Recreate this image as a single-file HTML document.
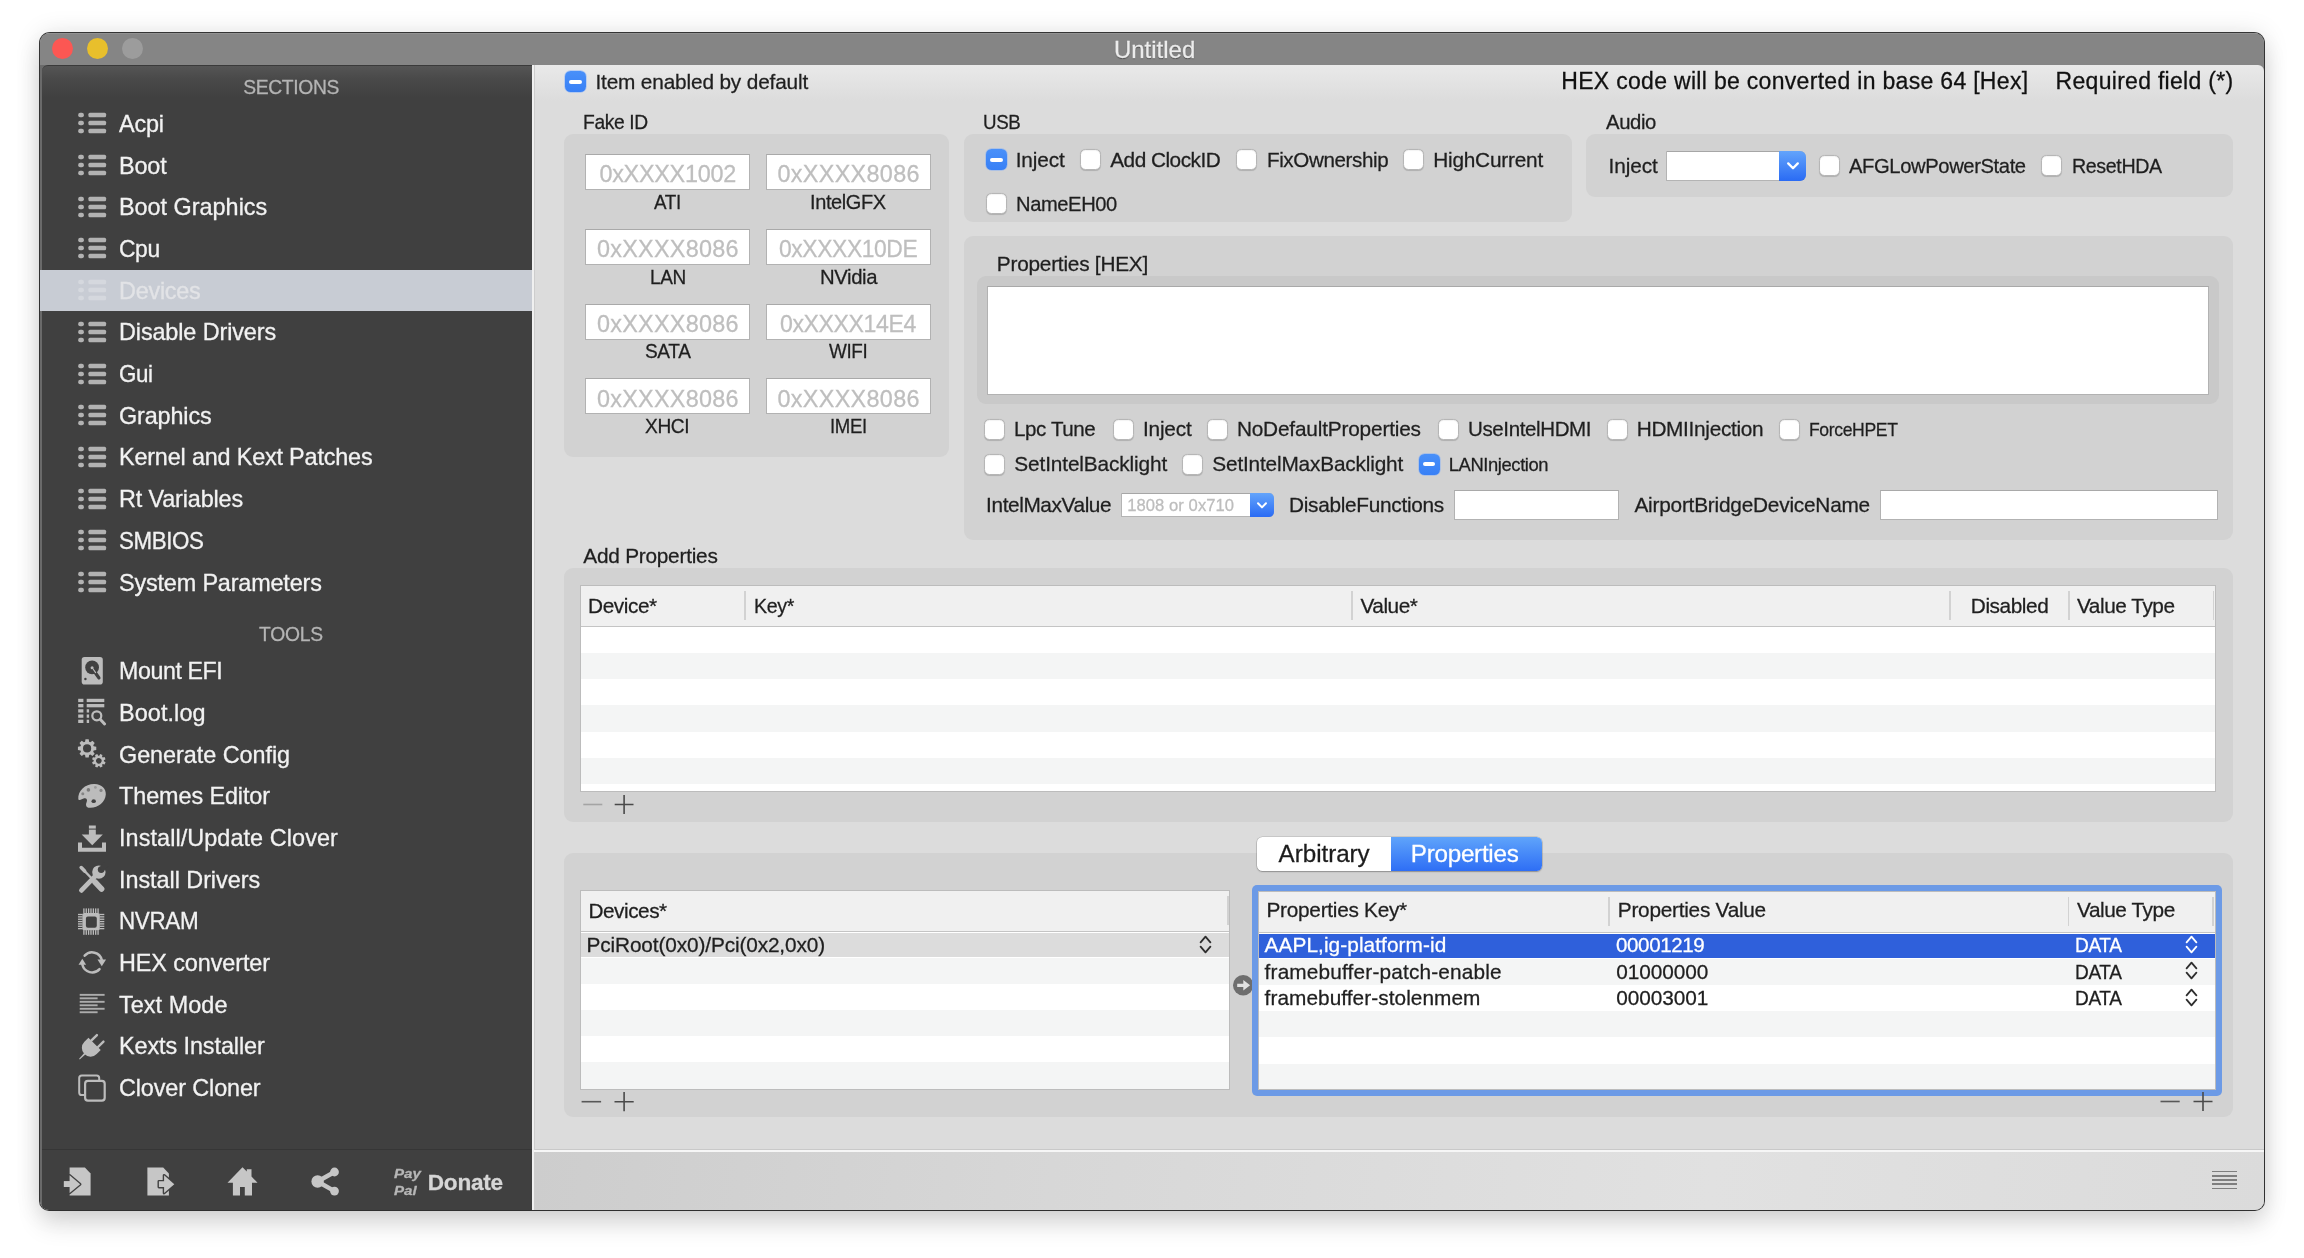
<!DOCTYPE html>
<html lang="en"><head><meta charset="utf-8"><title>Untitled</title>
<style>
html,body{margin:0;padding:0;background:#fff;}
body{width:2304px;height:1258px;overflow:hidden;position:relative;font-family:"Liberation Sans",sans-serif;}
#shadow{position:absolute;left:40px;top:33px;width:2224px;height:1177px;border-radius:10px 10px 9px 9px;
 box-shadow:0 0 0 1px rgba(0,0,0,.78),0 15px 24px rgba(0,0,0,.12),0 1px 26px rgba(0,0,0,.13);}
#win{position:absolute;left:40px;top:33px;width:2224px;height:1177px;border-radius:10px 10px 9px 9px;overflow:hidden;background:#858585;}
#in{will-change:transform;position:absolute;left:-40px;top:-33px;width:2304px;height:1258px;}
#in div{position:absolute;box-sizing:border-box;}
#in svg{position:absolute;overflow:visible;}
.t{position:absolute;white-space:pre;}
.cb{background:#fff;border:1px solid #b6b6b6;border-radius:5.5px;box-shadow:inset 0 1px 1px rgba(0,0,0,.05),0 .6px .8px rgba(0,0,0,.16);}
.cbm{border-radius:5.5px;background:linear-gradient(#4990f9,#3880f6);box-shadow:0 0 0 .7px rgba(120,170,255,.55);}
.cbm:after{content:"";position:absolute;left:4.4px;right:4.4px;top:8.7px;height:3.6px;border-radius:2px;background:#fff;}
.grp{background:#d2d2d2;border-radius:9px;}
.fld{background:#fff;border:1px solid #b2b2b2;border-top-color:#a9a9a9;}

</style></head>
<body>
<div id="shadow"></div>
<div id="win"><div id="in">
<div style="left:40px;top:33px;width:2225px;height:32px;background:#858585;border-top:1px solid #929292;"></div>
<div style="left:52.2px;top:38.1px;width:21px;height:21px;border-radius:50%;background:#fc5753;"></div>
<div style="left:87px;top:38.1px;width:21px;height:21px;border-radius:50%;background:#e8bf2c;"></div>
<div style="left:121.5px;top:38.1px;width:21px;height:21px;border-radius:50%;background:#9c9c9c;"></div>
<div style="left:40px;top:64.5px;width:492px;height:1147px;background:#6a6a6a;"></div>
<div style="left:41.5px;top:64.5px;width:490.5px;height:1147px;background:linear-gradient(#555 0,#4a4a4a 12px,#404040 32px);border-top-left-radius:6px;border-top:1px solid #3a3a3a;"></div>
<div style="left:40px;top:269.5px;width:492px;height:41.5px;background:#c8ccd4;"></div>
<svg style="left:78px;top:111.3px" width="29" height="24" viewBox="0 0 29 24" fill="#b2b2b2"><rect x="0.2" y="1.75" width="5.7" height="4.6" rx="2"/><rect x="10.4" y="1.75" width="17.7" height="4.6" rx="1.5"/><rect x="0.2" y="9.70" width="5.7" height="4.6" rx="2"/><rect x="10.4" y="9.70" width="17.7" height="4.6" rx="1.5"/><rect x="0.2" y="17.65" width="5.7" height="4.6" rx="2"/><rect x="10.4" y="17.65" width="17.7" height="4.6" rx="1.5"/></svg>
<svg style="left:78px;top:153.0px" width="29" height="24" viewBox="0 0 29 24" fill="#b2b2b2"><rect x="0.2" y="1.75" width="5.7" height="4.6" rx="2"/><rect x="10.4" y="1.75" width="17.7" height="4.6" rx="1.5"/><rect x="0.2" y="9.70" width="5.7" height="4.6" rx="2"/><rect x="10.4" y="9.70" width="17.7" height="4.6" rx="1.5"/><rect x="0.2" y="17.65" width="5.7" height="4.6" rx="2"/><rect x="10.4" y="17.65" width="17.7" height="4.6" rx="1.5"/></svg>
<svg style="left:78px;top:194.7px" width="29" height="24" viewBox="0 0 29 24" fill="#b2b2b2"><rect x="0.2" y="1.75" width="5.7" height="4.6" rx="2"/><rect x="10.4" y="1.75" width="17.7" height="4.6" rx="1.5"/><rect x="0.2" y="9.70" width="5.7" height="4.6" rx="2"/><rect x="10.4" y="9.70" width="17.7" height="4.6" rx="1.5"/><rect x="0.2" y="17.65" width="5.7" height="4.6" rx="2"/><rect x="10.4" y="17.65" width="17.7" height="4.6" rx="1.5"/></svg>
<svg style="left:78px;top:236.4px" width="29" height="24" viewBox="0 0 29 24" fill="#b2b2b2"><rect x="0.2" y="1.75" width="5.7" height="4.6" rx="2"/><rect x="10.4" y="1.75" width="17.7" height="4.6" rx="1.5"/><rect x="0.2" y="9.70" width="5.7" height="4.6" rx="2"/><rect x="10.4" y="9.70" width="17.7" height="4.6" rx="1.5"/><rect x="0.2" y="17.65" width="5.7" height="4.6" rx="2"/><rect x="10.4" y="17.65" width="17.7" height="4.6" rx="1.5"/></svg>
<svg style="left:78px;top:278.1px" width="29" height="24" viewBox="0 0 29 24" fill="#d5d8de"><rect x="0.2" y="1.75" width="5.7" height="4.6" rx="2"/><rect x="10.4" y="1.75" width="17.7" height="4.6" rx="1.5"/><rect x="0.2" y="9.70" width="5.7" height="4.6" rx="2"/><rect x="10.4" y="9.70" width="17.7" height="4.6" rx="1.5"/><rect x="0.2" y="17.65" width="5.7" height="4.6" rx="2"/><rect x="10.4" y="17.65" width="17.7" height="4.6" rx="1.5"/></svg>
<svg style="left:78px;top:319.8px" width="29" height="24" viewBox="0 0 29 24" fill="#b2b2b2"><rect x="0.2" y="1.75" width="5.7" height="4.6" rx="2"/><rect x="10.4" y="1.75" width="17.7" height="4.6" rx="1.5"/><rect x="0.2" y="9.70" width="5.7" height="4.6" rx="2"/><rect x="10.4" y="9.70" width="17.7" height="4.6" rx="1.5"/><rect x="0.2" y="17.65" width="5.7" height="4.6" rx="2"/><rect x="10.4" y="17.65" width="17.7" height="4.6" rx="1.5"/></svg>
<svg style="left:78px;top:361.5px" width="29" height="24" viewBox="0 0 29 24" fill="#b2b2b2"><rect x="0.2" y="1.75" width="5.7" height="4.6" rx="2"/><rect x="10.4" y="1.75" width="17.7" height="4.6" rx="1.5"/><rect x="0.2" y="9.70" width="5.7" height="4.6" rx="2"/><rect x="10.4" y="9.70" width="17.7" height="4.6" rx="1.5"/><rect x="0.2" y="17.65" width="5.7" height="4.6" rx="2"/><rect x="10.4" y="17.65" width="17.7" height="4.6" rx="1.5"/></svg>
<svg style="left:78px;top:403.2px" width="29" height="24" viewBox="0 0 29 24" fill="#b2b2b2"><rect x="0.2" y="1.75" width="5.7" height="4.6" rx="2"/><rect x="10.4" y="1.75" width="17.7" height="4.6" rx="1.5"/><rect x="0.2" y="9.70" width="5.7" height="4.6" rx="2"/><rect x="10.4" y="9.70" width="17.7" height="4.6" rx="1.5"/><rect x="0.2" y="17.65" width="5.7" height="4.6" rx="2"/><rect x="10.4" y="17.65" width="17.7" height="4.6" rx="1.5"/></svg>
<svg style="left:78px;top:444.9px" width="29" height="24" viewBox="0 0 29 24" fill="#b2b2b2"><rect x="0.2" y="1.75" width="5.7" height="4.6" rx="2"/><rect x="10.4" y="1.75" width="17.7" height="4.6" rx="1.5"/><rect x="0.2" y="9.70" width="5.7" height="4.6" rx="2"/><rect x="10.4" y="9.70" width="17.7" height="4.6" rx="1.5"/><rect x="0.2" y="17.65" width="5.7" height="4.6" rx="2"/><rect x="10.4" y="17.65" width="17.7" height="4.6" rx="1.5"/></svg>
<svg style="left:78px;top:486.6px" width="29" height="24" viewBox="0 0 29 24" fill="#b2b2b2"><rect x="0.2" y="1.75" width="5.7" height="4.6" rx="2"/><rect x="10.4" y="1.75" width="17.7" height="4.6" rx="1.5"/><rect x="0.2" y="9.70" width="5.7" height="4.6" rx="2"/><rect x="10.4" y="9.70" width="17.7" height="4.6" rx="1.5"/><rect x="0.2" y="17.65" width="5.7" height="4.6" rx="2"/><rect x="10.4" y="17.65" width="17.7" height="4.6" rx="1.5"/></svg>
<svg style="left:78px;top:528.3px" width="29" height="24" viewBox="0 0 29 24" fill="#b2b2b2"><rect x="0.2" y="1.75" width="5.7" height="4.6" rx="2"/><rect x="10.4" y="1.75" width="17.7" height="4.6" rx="1.5"/><rect x="0.2" y="9.70" width="5.7" height="4.6" rx="2"/><rect x="10.4" y="9.70" width="17.7" height="4.6" rx="1.5"/><rect x="0.2" y="17.65" width="5.7" height="4.6" rx="2"/><rect x="10.4" y="17.65" width="17.7" height="4.6" rx="1.5"/></svg>
<svg style="left:78px;top:570.0px" width="29" height="24" viewBox="0 0 29 24" fill="#b2b2b2"><rect x="0.2" y="1.75" width="5.7" height="4.6" rx="2"/><rect x="10.4" y="1.75" width="17.7" height="4.6" rx="1.5"/><rect x="0.2" y="9.70" width="5.7" height="4.6" rx="2"/><rect x="10.4" y="9.70" width="17.7" height="4.6" rx="1.5"/><rect x="0.2" y="17.65" width="5.7" height="4.6" rx="2"/><rect x="10.4" y="17.65" width="17.7" height="4.6" rx="1.5"/></svg>
<div style="left:41.5px;top:1149px;width:490.5px;height:1px;background:#363636;"></div>
<svg style="left:0;top:0" width="2304" height="1258" viewBox="0 0 2304 1258"><rect x="81.7" y="657" width="21.1" height="27.6" rx="2.8" fill="#bcbcbc"/><circle cx="92.1" cy="667.4" r="6.9" fill="#404040"/><circle cx="92.1" cy="667.7" r="1.5" fill="#bcbcbc"/><path d="M93.6 670.2 L98.9 677.9" stroke="#404040" stroke-width="3.3" stroke-linecap="round"/><path d="M92.4 668 L95.6 672.6" stroke="#bcbcbc" stroke-width="1.1" stroke-linecap="round"/><circle cx="85.4" cy="679" r="1.2" fill="#404040"/><g fill="#bcbcbc"><rect x="78.2" y="698.80" width="5.2" height="3.3"/><rect x="86.7" y="698.80" width="17.6" height="3.3"/><rect x="78.2" y="704.02" width="5.2" height="3.3"/><rect x="86.7" y="704.02" width="17.6" height="3.3"/><rect x="78.2" y="709.24" width="5.2" height="3.3"/><rect x="86.7" y="709.24" width="2.4" height="3.3"/><rect x="78.2" y="714.46" width="5.2" height="3.3"/><rect x="86.7" y="714.46" width="2.4" height="3.3"/><rect x="78.2" y="719.68" width="5.2" height="3.3"/><rect x="86.7" y="719.68" width="2.4" height="3.3"/></g><circle cx="96.8" cy="715.8" r="4.5" fill="none" stroke="#bcbcbc" stroke-width="2.2"/><path d="M100.4 719.5 L104.6 724" stroke="#bcbcbc" stroke-width="3" stroke-linecap="round"/><path d="M93.69 746.37 L96.26 746.80 L96.26 750.00 L93.69 750.43 L93.20 751.63 L94.71 753.75 L92.45 756.01 L90.33 754.50 L89.13 754.99 L88.70 757.56 L85.50 757.56 L85.07 754.99 L83.87 754.50 L81.75 756.01 L79.49 753.75 L81.00 751.63 L80.51 750.43 L77.94 750.00 L77.94 746.80 L80.51 746.37 L81.00 745.17 L79.49 743.05 L81.75 740.79 L83.87 742.30 L85.07 741.81 L85.50 739.24 L88.70 739.24 L89.13 741.81 L90.33 742.30 L92.45 740.79 L94.71 743.05 L93.20 745.17 Z M91.20 748.40 A4.1 4.1 0 1 0 83.00 748.40 A4.1 4.1 0 1 0 91.20 748.40 Z" fill="#bcbcbc" fill-rule="evenodd"/><path d="M103.67 759.30 L105.60 759.61 L105.60 761.99 L103.67 762.30 L103.31 763.19 L104.45 764.77 L102.77 766.45 L101.19 765.31 L100.30 765.67 L99.99 767.60 L97.61 767.60 L97.30 765.67 L96.41 765.31 L94.83 766.45 L93.15 764.77 L94.29 763.19 L93.93 762.30 L92.00 761.99 L92.00 759.61 L93.93 759.30 L94.29 758.41 L93.15 756.83 L94.83 755.15 L96.41 756.29 L97.30 755.93 L97.61 754.00 L99.99 754.00 L100.30 755.93 L101.19 756.29 L102.77 755.15 L104.45 756.83 L103.31 758.41 Z M101.60 760.80 A2.8 2.8 0 1 0 96.00 760.80 A2.8 2.8 0 1 0 101.60 760.80 Z" fill="#bcbcbc" fill-rule="evenodd" transform="rotate(22 98.8 760.8)"/><path d="M78.3 799.2 C77.6 790.5 85.5 783.6 94.6 783.9 C101.8 784.2 106.2 788.8 105.8 794.6 C105.3 802.4 97.8 808.2 89.6 807.8 C86 807.6 85.4 804.8 86.6 802.2 C87.7 799.7 86.6 797.8 84.2 798.3 C81.9 798.8 79.6 801.4 78.3 799.2 Z" fill="#bcbcbc"/><ellipse cx="93.7" cy="801.2" rx="2.2" ry="1.9" fill="#404040"/><circle cx="82.8" cy="793.7" r="1.5" fill="#858585"/><circle cx="88.4" cy="789.9" r="1.8" fill="#7a7a7a"/><circle cx="95.4" cy="787.4" r="1.4" fill="#9a9a9a"/><circle cx="101" cy="790.4" r="1.6" fill="#858585"/><g fill="#bcbcbc"><rect x="88.9" y="825.5" width="6.9" height="3.1"/><rect x="88.9" y="829.6" width="6.9" height="5.4"/><path d="M81.7 834.6 H102.8 L92.25 845.2 Z"/><path d="M78 842.5 h4 v5.3 h20 v-5.3 h4 v9.3 h-28 Z"/></g><g stroke="#bcbcbc" stroke-linecap="round" fill="none"><path d="M81.2 867.6 L84.6 871" stroke-width="3.6"/><path d="M82 868.4 L92.5 879.3" stroke-width="2.3"/><path d="M95 882 L101.6 889" stroke-width="5.6"/><path d="M81.4 890.4 L95.5 875.8" stroke-width="4.7"/></g><circle cx="98.9" cy="872.1" r="6.7" fill="#bcbcbc"/><circle cx="101.2" cy="869.6" r="3.4" fill="#404040"/><path d="M101.2 869.6 L107 863.5" stroke="#404040" stroke-width="5.6"/><g fill="#bcbcbc"><rect x="83.25" y="908.4" width="1.3" height="4.7"/><rect x="83.25" y="930.1" width="1.3" height="4.7"/><rect x="78" y="913.85" width="4.6" height="1.3"/><rect x="99.6" y="913.85" width="4.7" height="1.3"/><rect x="85.61" y="908.4" width="1.3" height="4.7"/><rect x="85.61" y="930.1" width="1.3" height="4.7"/><rect x="78" y="916.21" width="4.6" height="1.3"/><rect x="99.6" y="916.21" width="4.7" height="1.3"/><rect x="87.97" y="908.4" width="1.3" height="4.7"/><rect x="87.97" y="930.1" width="1.3" height="4.7"/><rect x="78" y="918.57" width="4.6" height="1.3"/><rect x="99.6" y="918.57" width="4.7" height="1.3"/><rect x="90.33" y="908.4" width="1.3" height="4.7"/><rect x="90.33" y="930.1" width="1.3" height="4.7"/><rect x="78" y="920.93" width="4.6" height="1.3"/><rect x="99.6" y="920.93" width="4.7" height="1.3"/><rect x="92.69" y="908.4" width="1.3" height="4.7"/><rect x="92.69" y="930.1" width="1.3" height="4.7"/><rect x="78" y="923.29" width="4.6" height="1.3"/><rect x="99.6" y="923.29" width="4.7" height="1.3"/><rect x="95.05" y="908.4" width="1.3" height="4.7"/><rect x="95.05" y="930.1" width="1.3" height="4.7"/><rect x="78" y="925.65" width="4.6" height="1.3"/><rect x="99.6" y="925.65" width="4.7" height="1.3"/><rect x="97.41" y="908.4" width="1.3" height="4.7"/><rect x="97.41" y="930.1" width="1.3" height="4.7"/><rect x="78" y="928.01" width="4.6" height="1.3"/><rect x="99.6" y="928.01" width="4.7" height="1.3"/><rect x="82.4" y="912.9" width="17.4" height="17.4" rx="1.6"/></g><rect x="85.9" y="916.4" width="10.9" height="11.4" rx="2" fill="#404040"/><g fill="none" stroke="#bcbcbc" stroke-width="2.5" stroke-linecap="round"><path d="M84.67 955.71 A10 10 0 0 1 101.80 959.98"/><path d="M99.53 969.09 A10 10 0 0 1 82.40 964.82"/></g><path d="M97.49 959.55 L106.09 959.55 L101.79 966.35 Z" fill="#bcbcbc"/><path d="M86.11 964.85 L78.51 964.85 L82.31 958.85 Z" fill="#bcbcbc"/><g fill="#acacac"><rect x="79.7" y="993.90" width="24.9" height="1.9"/><rect x="79.7" y="997.38" width="17.9" height="1.9"/><rect x="79.7" y="1000.86" width="24.9" height="1.9"/><rect x="79.7" y="1004.34" width="17.9" height="1.9"/><rect x="79.7" y="1007.82" width="24.9" height="1.9"/><rect x="79.7" y="1011.30" width="17.9" height="1.9"/></g><g transform="translate(94.6 1043.9) rotate(45) scale(1.1)" fill="#bcbcbc"><rect x="-5.3" y="-8.2" width="2.2" height="9" rx="1"/><rect x="3.1" y="-8.2" width="2.2" height="9" rx="1"/><path d="M-7.9 0 H7.9 V5.2 A7.9 7.9 0 0 1 -7.9 5.2 Z"/><path d="M-0.9 12.5 L0.9 12.5 L0.4 19.5 L-0.4 19.5 Z"/></g><rect x="79.2" y="1075.4" width="20" height="19.6" rx="2.6" fill="none" stroke="#bcbcbc" stroke-width="2"/><rect x="85.1" y="1080.9" width="19.6" height="19.7" rx="2.8" fill="#404040" stroke="#bcbcbc" stroke-width="2.2"/><path d="M69.6 1167.4 H84.9 L90.6 1173.6 V1195.6 H69.6 Z" fill="#c6c6c6"/><path d="M63.9 1181.3 H69.6 V1175.3 L80.2 1184.15 L69.6 1193 V1187 H63.9 Z" fill="#c6c6c6" stroke="#404040" stroke-width="2.6" stroke-linejoin="round" paint-order="stroke"/><path d="M63.9 1181.3 H70 V1187 H63.9 Z" fill="#c6c6c6"/><path d="M147.4 1167.4 H163.2 L168.9 1173.6 V1195.6 H147.4 Z" fill="#c6c6c6"/><path d="M158.9 1181.3 H164.1 V1175.3 L174.3 1184.15 L164.1 1193 V1187 H158.9 Z" fill="#c6c6c6" stroke="#404040" stroke-width="2.8" stroke-linejoin="round" paint-order="stroke"/><path d="M242.5 1167.2 L246.8 1171.6 V1169.3 H251.5 V1176.5 L257.5 1182.7 H252 V1195.6 H244.8 V1187 H240 V1195.6 H232.9 V1182.7 H227.5 Z" fill="#c6c6c6"/><g fill="#c6c6c6" stroke="#c6c6c6"><circle cx="317.6" cy="1181.5" r="6.2" stroke="none"/><circle cx="334.5" cy="1172" r="4.4" stroke="none"/><circle cx="334.5" cy="1191.1" r="4.4" stroke="none"/><path d="M317.6 1181.5 L334.5 1172 M317.6 1181.5 L334.5 1191.1" stroke-width="4.4" fill="none"/></g></svg>
<div style="left:532px;top:64.5px;width:1732px;height:1147px;background:linear-gradient(#e9e9e9 0,#dcdcdc 36px);border-top-right-radius:6px;"></div>
<div style="left:532px;top:64.5px;width:2px;height:1147px;background:#f0f0f0;"></div>
<div style="left:534px;top:1148.6px;width:1730px;height:1.2px;background:#c9c9c9;"></div>
<div style="left:534px;top:1149.8px;width:1730px;height:61.5px;background:linear-gradient(97deg,#cdcdcd 0%,#d7d7d7 30%,#e1e1e1 68%,#dbdbdb 100%);border-top:2px solid #f6f6f6;"></div>
<div style="left:534px;top:64.5px;width:1px;height:1085px;background:#cdcdcd;"></div>
<div style="left:2211.5px;top:1170.8px;width:25.3px;height:1.6px;background:#7e7e7e;"></div>
<div style="left:2211.5px;top:1175px;width:25.3px;height:1.6px;background:#7e7e7e;"></div>
<div style="left:2211.5px;top:1179.2px;width:25.3px;height:1.6px;background:#7e7e7e;"></div>
<div style="left:2211.5px;top:1183.4px;width:25.3px;height:1.6px;background:#7e7e7e;"></div>
<div style="left:2211.5px;top:1187.6px;width:25.3px;height:1.6px;background:#7e7e7e;"></div>
<div class="cbm" style="left:565px;top:71.3px;width:21px;height:21px;"></div>
<div class="grp" style="left:563.5px;top:134.2px;width:385.5px;height:322.8px;"></div>
<div class="fld" style="left:585.3px;top:154px;width:165px;height:36px;"></div>
<div class="fld" style="left:766px;top:154px;width:165px;height:36px;"></div>
<div class="fld" style="left:585.3px;top:228.75px;width:165px;height:36px;"></div>
<div class="fld" style="left:766px;top:228.75px;width:165px;height:36px;"></div>
<div class="fld" style="left:585.3px;top:303.5px;width:165px;height:36px;"></div>
<div class="fld" style="left:766px;top:303.5px;width:165px;height:36px;"></div>
<div class="fld" style="left:585.3px;top:378.25px;width:165px;height:36px;"></div>
<div class="fld" style="left:766px;top:378.25px;width:165px;height:36px;"></div>
<div class="grp" style="left:963.5px;top:134px;width:608.5px;height:88px;"></div>
<div class="cbm" style="left:986.1px;top:149.3px;width:21px;height:21px;"></div>
<div class="cb" style="left:1079.8px;top:149.3px;width:21px;height:21px;"></div>
<div class="cb" style="left:1236.1px;top:149.3px;width:21px;height:21px;"></div>
<div class="cb" style="left:1403.1px;top:149.3px;width:21px;height:21px;"></div>
<div class="cb" style="left:986.1px;top:193.2px;width:21px;height:21px;"></div>
<div class="grp" style="left:1585.8px;top:134px;width:647px;height:62.5px;"></div>
<div style="left:1666.4px;top:151.4px;width:139.7px;height:29.2px;background:#fff;border:1px solid #b4b4b4;border-top-color:#a6a6a6;border-radius:0 6px 6px 0;"></div>
<div style="left:1779px;top:151.4px;width:27.1px;height:29.2px;background:linear-gradient(#63a4fb,#2a6bf4);border-radius:0 6px 6px 0;"></div>
<svg style="left:1785.5px;top:160.5px" width="14" height="10" viewBox="0 0 14 10"><path d="M2.2 2.4 L7 7.3 L11.8 2.4" fill="none" stroke="#fff" stroke-width="2.3" stroke-linecap="round" stroke-linejoin="round"/></svg>
<div class="cb" style="left:1818.8px;top:154.6px;width:21px;height:21px;"></div>
<div class="cb" style="left:2041.4px;top:154.6px;width:21px;height:21px;"></div>
<div class="grp" style="left:963.5px;top:236.3px;width:1269.2px;height:304.2px;"></div>
<div style="left:977.4px;top:276.3px;width:1241.8px;height:128.1px;background:#c9c9c9;border-radius:9px;"></div>
<div class="fld" style="left:986.7px;top:285.6px;width:1222.6px;height:109.5px;"></div>
<div class="cb" style="left:984.2px;top:418.8px;width:21px;height:21px;"></div>
<div class="cb" style="left:1112.8px;top:418.8px;width:21px;height:21px;"></div>
<div class="cb" style="left:1206.5px;top:418.8px;width:21px;height:21px;"></div>
<div class="cb" style="left:1437.8px;top:418.8px;width:21px;height:21px;"></div>
<div class="cb" style="left:1606.8px;top:418.8px;width:21px;height:21px;"></div>
<div class="cb" style="left:1778.9px;top:418.8px;width:21px;height:21px;"></div>
<div class="cb" style="left:984.2px;top:453.8px;width:21px;height:21px;"></div>
<div class="cb" style="left:1182.2px;top:453.8px;width:21px;height:21px;"></div>
<div class="cbm" style="left:1418.7px;top:453.8px;width:21px;height:21px;"></div>
<div style="left:1120.7px;top:493px;width:152.9px;height:24.2px;background:#fff;border:1px solid #b4b4b4;border-top-color:#a6a6a6;border-radius:0 5px 5px 0;"></div>
<div style="left:1250.1px;top:493px;width:23.5px;height:24.2px;background:linear-gradient(#63a4fb,#2a6bf4);border-radius:0 5px 5px 0;"></div>
<svg style="left:1255.8px;top:501.2px" width="12" height="9" viewBox="0 0 12 9"><path d="M2 2.3 L6 6.4 L10 2.3" fill="none" stroke="#fff" stroke-width="2" stroke-linecap="round" stroke-linejoin="round"/></svg>
<div class="fld" style="left:1454px;top:489.6px;width:164.6px;height:30.4px;"></div>
<div class="fld" style="left:1879.8px;top:489.6px;width:338px;height:30.4px;"></div>
<div class="grp" style="left:563.5px;top:568.1px;width:1669.2px;height:254px;"></div>
<div style="left:579.6px;top:585px;width:1636.6px;height:206.5px;background:#fff;border:1px solid #bcbcbc;overflow:hidden;"><div style="left:0;top:0;width:1634.6px;height:40.8px;background:#f0f0f0;border-bottom:1px solid #c4c4c4;"></div><div style="left:0;top:41.1px;width:1634.6px;height:26.3px;background:#fff;"></div><div style="left:0;top:67.2px;width:1634.6px;height:26.3px;background:#f4f5f5;"></div><div style="left:0;top:93.3px;width:1634.6px;height:26.3px;background:#fff;"></div><div style="left:0;top:119.4px;width:1634.6px;height:26.3px;background:#f4f5f5;"></div><div style="left:0;top:145.5px;width:1634.6px;height:26.3px;background:#fff;"></div><div style="left:0;top:171.6px;width:1634.6px;height:26.3px;background:#f4f5f5;"></div><div style="left:0;top:197.7px;width:1634.6px;height:26.3px;background:#fff;"></div></div>
<div style="left:744.4px;top:590.6px;width:1.4px;height:29.2px;background:#d2d2d2;"></div>
<div style="left:1351.4px;top:590.6px;width:1.4px;height:29.2px;background:#d2d2d2;"></div>
<div style="left:1949.4px;top:590.6px;width:1.4px;height:29.2px;background:#d2d2d2;"></div>
<div style="left:2068.2px;top:590.6px;width:1.4px;height:29.2px;background:#d2d2d2;"></div>
<div style="left:2212.9px;top:590.6px;width:1.4px;height:29.2px;background:#d2d2d2;"></div>
<svg style="left:0;top:0" width="2304" height="1258"><path d="M583.3 804.5 h19.0" stroke="#a4a4a4" stroke-width="1.6" fill="none"/></svg>
<svg style="left:0;top:0" width="2304" height="1258"><path d="M614.7 804.5 h18.8 M624.1 795.1 v18.8" stroke="#4a4a4a" stroke-width="1.6" fill="none"/></svg>
<div class="grp" style="left:563.7px;top:852.6px;width:1669px;height:264.4px;"></div>
<div style="left:580px;top:890px;width:650.3px;height:200.2px;background:#fff;border:1px solid #bcbcbc;overflow:hidden;"><div style="left:0;top:0;width:648.3px;height:40.6px;background:#f0f0f0;border-bottom:1px solid #c4c4c4;"></div><div style="left:0;top:40.9px;width:648.3px;height:26.3px;background:#fff;"></div><div style="left:0;top:42.3px;width:648.3px;height:23.9px;background:#dcdcdc;"></div><div style="left:0;top:67.0px;width:648.3px;height:26.3px;background:#f4f5f5;"></div><div style="left:0;top:93.1px;width:648.3px;height:26.3px;background:#fff;"></div><div style="left:0;top:119.2px;width:648.3px;height:26.3px;background:#f4f5f5;"></div><div style="left:0;top:145.3px;width:648.3px;height:26.3px;background:#fff;"></div><div style="left:0;top:171.4px;width:648.3px;height:26.3px;background:#f4f5f5;"></div></div>
<div style="left:1227.4px;top:895.5px;width:1.4px;height:29.2px;background:#d2d2d2;"></div>
<svg style="left:1200.3px;top:934.9px" width="11" height="19" viewBox="0 0 11 19"><path d="M0.6 7.3 L5.5 1.6 L10.4 7.3 M0.6 11.7 L5.5 17.4 L10.4 11.7" fill="none" stroke="#2e2e2e" stroke-width="1.8" stroke-linecap="round" stroke-linejoin="round"/></svg>
<svg style="left:0;top:0" width="2304" height="1258"><path d="M581.6 1101.7 h19.5" stroke="#585858" stroke-width="1.6" fill="none"/></svg>
<svg style="left:0;top:0" width="2304" height="1258"><path d="M614.5 1101.7 h19.2 M624.1 1092.1 v19.2" stroke="#4a4a4a" stroke-width="1.6" fill="none"/></svg>
<svg style="left:1232.9px;top:974.9px" width="20.4" height="20.4" viewBox="0 0 20 20"><circle cx="10" cy="10" r="10" fill="#6e6e6e"/><path d="M4.1 8.5 H10.1 V4.9 L16.8 10.1 L10.1 15.3 V11.7 H4.1 Z" fill="#e2e2e2"/></svg>
<div style="left:1256.5px;top:837px;width:285.2px;height:34.2px;background:#fff;border-radius:5.5px;box-shadow:0 0 0 .6px rgba(0,0,0,.18),0 1px 1.5px rgba(0,0,0,.25);"></div>
<div style="left:1391.2px;top:837px;width:150.5px;height:34.2px;background:linear-gradient(#5fa4fb,#2e6ef5);border-radius:0 5.5px 5.5px 0;"></div>
<div style="left:1252.2px;top:885.2px;width:969.6px;height:211px;background:#6c9ae6;border-radius:5px;"></div>
<div style="left:1258.4px;top:891px;width:957.6px;height:199.3px;background:#fff;border:1px solid #bcbcbc;overflow:hidden;"><div style="left:0;top:0;width:957.6px;height:40.7px;background:#f0f0f0;border-bottom:1px solid #c4c4c4;"></div><div style="left:0;top:41.0px;width:957.6px;height:26.3px;background:#fff;"></div><div style="left:0;top:42.4px;width:957.6px;height:23.9px;background:#2f60db;"></div><div style="left:0;top:67.1px;width:957.6px;height:26.3px;background:#f4f5f5;"></div><div style="left:0;top:93.2px;width:957.6px;height:26.3px;background:#fff;"></div><div style="left:0;top:119.3px;width:957.6px;height:26.3px;background:#f4f5f5;"></div><div style="left:0;top:145.4px;width:957.6px;height:26.3px;background:#fff;"></div><div style="left:0;top:171.5px;width:957.6px;height:26.3px;background:#f4f5f5;"></div></div>
<div style="left:1608.4px;top:896.5px;width:1.4px;height:29.2px;background:#d2d2d2;"></div>
<div style="left:2068px;top:896.5px;width:1.4px;height:29.2px;background:#d2d2d2;"></div>
<div style="left:2212.4px;top:896.5px;width:1.4px;height:29.2px;background:#d2d2d2;"></div>
<svg style="left:2186.0px;top:934.9px" width="11" height="19" viewBox="0 0 11 19"><path d="M0.6 7.3 L5.5 1.6 L10.4 7.3 M0.6 11.7 L5.5 17.4 L10.4 11.7" fill="none" stroke="#fff" stroke-width="1.8" stroke-linecap="round" stroke-linejoin="round"/></svg>
<svg style="left:2186.0px;top:961.2px" width="11" height="19" viewBox="0 0 11 19"><path d="M0.6 7.3 L5.5 1.6 L10.4 7.3 M0.6 11.7 L5.5 17.4 L10.4 11.7" fill="none" stroke="#2e2e2e" stroke-width="1.8" stroke-linecap="round" stroke-linejoin="round"/></svg>
<svg style="left:2186.0px;top:987.5px" width="11" height="19" viewBox="0 0 11 19"><path d="M0.6 7.3 L5.5 1.6 L10.4 7.3 M0.6 11.7 L5.5 17.4 L10.4 11.7" fill="none" stroke="#2e2e2e" stroke-width="1.8" stroke-linecap="round" stroke-linejoin="round"/></svg>
<svg style="left:0;top:0" width="2304" height="1258"><path d="M2160.5 1101.5 h19.2" stroke="#585858" stroke-width="1.6" fill="none"/></svg>
<svg style="left:0;top:0" width="2304" height="1258"><path d="M2193.5 1101.5 h19.0 M2203.0 1092.0 v19.0" stroke="#4a4a4a" stroke-width="1.6" fill="none"/></svg>
<span class="t" style="left:1113.90px;top:38.00px;font-size:24px;line-height:24px;color:#ececec;-webkit-text-stroke:0.27px;text-shadow:0 1px 1px rgba(0,0,0,.45);">Untitled</span>
<span class="t" style="left:243.30px;top:78.00px;font-size:19.3px;line-height:19.3px;color:#b4b4b4;letter-spacing:-0.366px;-webkit-text-stroke:0.27px;">SECTIONS</span>
<span class="t" style="left:259.00px;top:625.00px;font-size:19.3px;line-height:19.3px;color:#b4b4b4;letter-spacing:-0.254px;-webkit-text-stroke:0.27px;">TOOLS</span>
<span class="t" style="left:119.00px;top:113.00px;font-size:23.4px;line-height:23.4px;color:#f2f2f2;letter-spacing:-0.172px;-webkit-text-stroke:0.3px;">Acpi</span>
<span class="t" style="left:119.00px;top:155.00px;font-size:23.4px;line-height:23.4px;color:#f2f2f2;letter-spacing:-0.142px;-webkit-text-stroke:0.3px;">Boot</span>
<span class="t" style="left:119.00px;top:196.00px;font-size:23.4px;line-height:23.4px;color:#f2f2f2;-webkit-text-stroke:0.3px;">Boot Graphics</span>
<span class="t" style="left:119.00px;top:238.00px;font-size:23.4px;line-height:23.4px;color:#f2f2f2;letter-spacing:-0.400px;-webkit-text-stroke:0.3px;transform:scaleX(0.9757);transform-origin:0 50%;">Cpu</span>
<span class="t" style="left:119.00px;top:280.00px;font-size:23.4px;line-height:23.4px;color:#e2e3e6;letter-spacing:-0.234px;-webkit-text-stroke:0.3px;">Devices</span>
<span class="t" style="left:119.00px;top:321.00px;font-size:23.4px;line-height:23.4px;color:#f2f2f2;letter-spacing:-0.106px;-webkit-text-stroke:0.3px;">Disable Drivers</span>
<span class="t" style="left:119.00px;top:363.00px;font-size:23.4px;line-height:23.4px;color:#f2f2f2;letter-spacing:-0.400px;-webkit-text-stroke:0.3px;transform:scaleX(0.9549);transform-origin:0 50%;">Gui</span>
<span class="t" style="left:119.00px;top:405.00px;font-size:23.4px;line-height:23.4px;color:#f2f2f2;letter-spacing:-0.130px;-webkit-text-stroke:0.3px;">Graphics</span>
<span class="t" style="left:119.00px;top:446.00px;font-size:23.4px;line-height:23.4px;color:#f2f2f2;letter-spacing:-0.176px;-webkit-text-stroke:0.3px;">Kernel and Kext Patches</span>
<span class="t" style="left:119.00px;top:488.00px;font-size:23.4px;line-height:23.4px;color:#f2f2f2;letter-spacing:-0.134px;-webkit-text-stroke:0.3px;">Rt Variables</span>
<span class="t" style="left:119.00px;top:530.00px;font-size:23.4px;line-height:23.4px;color:#f2f2f2;letter-spacing:-0.400px;-webkit-text-stroke:0.3px;transform:scaleX(0.9552);transform-origin:0 50%;">SMBIOS</span>
<span class="t" style="left:119.00px;top:572.00px;font-size:23.4px;line-height:23.4px;color:#f2f2f2;letter-spacing:-0.156px;-webkit-text-stroke:0.3px;">System Parameters</span>
<span class="t" style="left:119.00px;top:660.00px;font-size:23.4px;line-height:23.4px;color:#f2f2f2;letter-spacing:-0.400px;-webkit-text-stroke:0.3px;transform:scaleX(0.9913);transform-origin:0 50%;">Mount EFI</span>
<span class="t" style="left:119.00px;top:702.00px;font-size:23.4px;line-height:23.4px;color:#f2f2f2;letter-spacing:0.094px;-webkit-text-stroke:0.3px;">Boot.log</span>
<span class="t" style="left:119.00px;top:744.00px;font-size:23.4px;line-height:23.4px;color:#f2f2f2;letter-spacing:-0.039px;-webkit-text-stroke:0.3px;">Generate Config</span>
<span class="t" style="left:119.00px;top:785.00px;font-size:23.4px;line-height:23.4px;color:#f2f2f2;letter-spacing:-0.084px;-webkit-text-stroke:0.3px;">Themes Editor</span>
<span class="t" style="left:119.00px;top:827.00px;font-size:23.4px;line-height:23.4px;color:#f2f2f2;letter-spacing:0.084px;-webkit-text-stroke:0.3px;">Install/Update Clover</span>
<span class="t" style="left:119.00px;top:869.00px;font-size:23.4px;line-height:23.4px;color:#f2f2f2;letter-spacing:-0.041px;-webkit-text-stroke:0.3px;">Install Drivers</span>
<span class="t" style="left:119.00px;top:910.00px;font-size:23.4px;line-height:23.4px;color:#f2f2f2;letter-spacing:-0.400px;-webkit-text-stroke:0.3px;transform:scaleX(0.9604);transform-origin:0 50%;">NVRAM</span>
<span class="t" style="left:119.00px;top:952.00px;font-size:23.4px;line-height:23.4px;color:#f2f2f2;letter-spacing:-0.084px;-webkit-text-stroke:0.3px;">HEX converter</span>
<span class="t" style="left:119.00px;top:994.00px;font-size:23.4px;line-height:23.4px;color:#f2f2f2;letter-spacing:0.060px;-webkit-text-stroke:0.3px;">Text Mode</span>
<span class="t" style="left:119.00px;top:1035.00px;font-size:23.4px;line-height:23.4px;color:#f2f2f2;letter-spacing:-0.079px;-webkit-text-stroke:0.3px;">Kexts Installer</span>
<span class="t" style="left:119.00px;top:1077.00px;font-size:23.4px;line-height:23.4px;color:#f2f2f2;letter-spacing:-0.117px;-webkit-text-stroke:0.3px;">Clover Cloner</span>
<span class="t" style="left:427.80px;top:1172.00px;font-size:22.6px;line-height:22.6px;color:#d6d6d6;letter-spacing:-0.256px;font-weight:700;-webkit-text-stroke:0.27px;">Donate</span>
<span class="t" style="left:393.60px;top:1168.00px;font-size:12.4px;line-height:12.4px;color:#b6b6b6;font-weight:700;font-style:italic;-webkit-text-stroke:0.27px;transform:scaleX(1.22);transform-origin:0 0;">Pay</span>
<span class="t" style="left:393.60px;top:1185.00px;font-size:12.4px;line-height:12.4px;color:#b6b6b6;font-weight:700;font-style:italic;-webkit-text-stroke:0.27px;transform:scaleX(1.22);transform-origin:0 0;">Pal</span>
<span class="t" style="left:595.40px;top:72.00px;font-size:20.8px;line-height:20.8px;color:#1f1f1f;letter-spacing:-0.151px;-webkit-text-stroke:0.27px;">Item enabled by default</span>
<span class="t" style="left:1561.30px;top:70.00px;font-size:23px;line-height:23px;color:#111;letter-spacing:0.308px;-webkit-text-stroke:0.27px;">HEX code will be converted in base 64 [Hex]</span>
<span class="t" style="left:2055.60px;top:70.00px;font-size:23px;line-height:23px;color:#111;letter-spacing:0.289px;-webkit-text-stroke:0.27px;">Required field (*)</span>
<span class="t" style="left:583.00px;top:112.00px;font-size:20.8px;line-height:20.8px;color:#1f1f1f;letter-spacing:-0.400px;-webkit-text-stroke:0.27px;transform:scaleX(0.9260);transform-origin:0 50%;">Fake ID</span>
<span class="t" style="left:599.40px;top:163.00px;font-size:23.4px;line-height:23.4px;color:#bebebe;letter-spacing:-0.262px;-webkit-text-stroke:0.27px;">0xXXXX1002</span>
<span class="t" style="left:654.10px;top:192.00px;font-size:20.8px;line-height:20.8px;color:#1f1f1f;letter-spacing:-0.400px;-webkit-text-stroke:0.27px;transform:scaleX(0.9063);transform-origin:0 50%;">ATI</span>
<span class="t" style="left:777.50px;top:163.00px;font-size:23.4px;line-height:23.4px;color:#bebebe;letter-spacing:0.316px;-webkit-text-stroke:0.27px;">0xXXXX8086</span>
<span class="t" style="left:810.30px;top:192.00px;font-size:20.8px;line-height:20.8px;color:#1f1f1f;letter-spacing:-0.400px;-webkit-text-stroke:0.27px;transform:scaleX(0.9614);transform-origin:0 50%;">IntelGFX</span>
<span class="t" style="left:597.00px;top:238.00px;font-size:23.4px;line-height:23.4px;color:#bebebe;letter-spacing:0.272px;-webkit-text-stroke:0.27px;">0xXXXX8086</span>
<span class="t" style="left:649.60px;top:267.00px;font-size:20.8px;line-height:20.8px;color:#1f1f1f;letter-spacing:-0.400px;-webkit-text-stroke:0.27px;transform:scaleX(0.9126);transform-origin:0 50%;">LAN</span>
<span class="t" style="left:779.15px;top:238.00px;font-size:23.4px;line-height:23.4px;color:#bebebe;letter-spacing:-0.400px;-webkit-text-stroke:0.27px;transform:scaleX(0.9766);transform-origin:0 50%;">0xXXXX10DE</span>
<span class="t" style="left:819.65px;top:267.00px;font-size:20.8px;line-height:20.8px;color:#1f1f1f;letter-spacing:-0.400px;-webkit-text-stroke:0.27px;transform:scaleX(0.9764);transform-origin:0 50%;">NVidia</span>
<span class="t" style="left:597.00px;top:313.00px;font-size:23.4px;line-height:23.4px;color:#bebebe;letter-spacing:0.272px;-webkit-text-stroke:0.27px;">0xXXXX8086</span>
<span class="t" style="left:644.75px;top:341.00px;font-size:20.8px;line-height:20.8px;color:#1f1f1f;letter-spacing:-0.400px;-webkit-text-stroke:0.27px;transform:scaleX(0.9174);transform-origin:0 50%;">SATA</span>
<span class="t" style="left:780.35px;top:313.00px;font-size:23.4px;line-height:23.4px;color:#bebebe;letter-spacing:-0.400px;-webkit-text-stroke:0.27px;transform:scaleX(0.9866);transform-origin:0 50%;">0xXXXX14E4</span>
<span class="t" style="left:829.05px;top:341.00px;font-size:20.8px;line-height:20.8px;color:#1f1f1f;letter-spacing:-0.400px;-webkit-text-stroke:0.27px;transform:scaleX(0.9065);transform-origin:0 50%;">WIFI</span>
<span class="t" style="left:597.00px;top:388.00px;font-size:23.4px;line-height:23.4px;color:#bebebe;letter-spacing:0.272px;-webkit-text-stroke:0.27px;">0xXXXX8086</span>
<span class="t" style="left:645.40px;top:416.00px;font-size:20.8px;line-height:20.8px;color:#1f1f1f;letter-spacing:-0.400px;-webkit-text-stroke:0.27px;transform:scaleX(0.9198);transform-origin:0 50%;">XHCI</span>
<span class="t" style="left:777.50px;top:388.00px;font-size:23.4px;line-height:23.4px;color:#bebebe;letter-spacing:0.316px;-webkit-text-stroke:0.27px;">0xXXXX8086</span>
<span class="t" style="left:829.85px;top:416.00px;font-size:20.8px;line-height:20.8px;color:#1f1f1f;letter-spacing:-0.400px;-webkit-text-stroke:0.27px;transform:scaleX(0.8926);transform-origin:0 50%;">IMEI</span>
<span class="t" style="left:983.30px;top:112.00px;font-size:20.8px;line-height:20.8px;color:#1f1f1f;letter-spacing:-0.400px;-webkit-text-stroke:0.27px;transform:scaleX(0.9007);transform-origin:0 50%;">USB</span>
<span class="t" style="left:1015.70px;top:150.00px;font-size:20.8px;line-height:20.8px;color:#1f1f1f;letter-spacing:-0.124px;-webkit-text-stroke:0.27px;">Inject</span>
<span class="t" style="left:1110.20px;top:150.00px;font-size:20.8px;line-height:20.8px;color:#1f1f1f;letter-spacing:-0.499px;-webkit-text-stroke:0.27px;">Add ClockID</span>
<span class="t" style="left:1266.50px;top:150.00px;font-size:20.8px;line-height:20.8px;color:#1f1f1f;letter-spacing:-0.400px;-webkit-text-stroke:0.27px;transform:scaleX(0.9907);transform-origin:0 50%;">FixOwnership</span>
<span class="t" style="left:1433.20px;top:150.00px;font-size:20.8px;line-height:20.8px;color:#1f1f1f;letter-spacing:-0.212px;-webkit-text-stroke:0.27px;">HighCurrent</span>
<span class="t" style="left:1015.70px;top:194.00px;font-size:20.8px;line-height:20.8px;color:#1f1f1f;letter-spacing:-0.400px;-webkit-text-stroke:0.27px;transform:scaleX(0.9675);transform-origin:0 50%;">NameEH00</span>
<span class="t" style="left:1605.60px;top:112.00px;font-size:20.8px;line-height:20.8px;color:#1f1f1f;letter-spacing:-0.400px;-webkit-text-stroke:0.27px;transform:scaleX(0.9767);transform-origin:0 50%;">Audio</span>
<span class="t" style="left:1608.60px;top:156.00px;font-size:20.8px;line-height:20.8px;color:#1f1f1f;letter-spacing:-0.104px;-webkit-text-stroke:0.27px;">Inject</span>
<span class="t" style="left:1849.30px;top:156.00px;font-size:20.8px;line-height:20.8px;color:#1f1f1f;letter-spacing:-0.400px;-webkit-text-stroke:0.27px;transform:scaleX(0.9708);transform-origin:0 50%;">AFGLowPowerState</span>
<span class="t" style="left:2072.00px;top:156.00px;font-size:20.8px;line-height:20.8px;color:#1f1f1f;letter-spacing:-0.400px;-webkit-text-stroke:0.27px;transform:scaleX(0.9450);transform-origin:0 50%;">ResetHDA</span>
<span class="t" style="left:996.80px;top:254.00px;font-size:20.8px;line-height:20.8px;color:#1f1f1f;letter-spacing:-0.226px;-webkit-text-stroke:0.27px;">Properties [HEX]</span>
<span class="t" style="left:1014.30px;top:419.00px;font-size:20.8px;line-height:20.8px;color:#1f1f1f;letter-spacing:-0.400px;-webkit-text-stroke:0.27px;transform:scaleX(0.9882);transform-origin:0 50%;">Lpc Tune</span>
<span class="t" style="left:1143.00px;top:419.00px;font-size:20.8px;line-height:20.8px;color:#1f1f1f;letter-spacing:-0.204px;-webkit-text-stroke:0.27px;">Inject</span>
<span class="t" style="left:1236.90px;top:419.00px;font-size:20.8px;line-height:20.8px;color:#1f1f1f;letter-spacing:-0.176px;-webkit-text-stroke:0.27px;">NoDefaultProperties</span>
<span class="t" style="left:1468.20px;top:419.00px;font-size:20.8px;line-height:20.8px;color:#1f1f1f;letter-spacing:-0.400px;-webkit-text-stroke:0.27px;transform:scaleX(0.9877);transform-origin:0 50%;">UseIntelHDMI</span>
<span class="t" style="left:1636.70px;top:419.00px;font-size:20.8px;line-height:20.8px;color:#1f1f1f;letter-spacing:-0.309px;-webkit-text-stroke:0.27px;">HDMIInjection</span>
<span class="t" style="left:1808.70px;top:421.00px;font-size:18.4px;line-height:18.4px;color:#1f1f1f;letter-spacing:-0.400px;-webkit-text-stroke:0.27px;transform:scaleX(0.9573);transform-origin:0 50%;">ForceHPET</span>
<span class="t" style="left:1014.30px;top:454.00px;font-size:20.8px;line-height:20.8px;color:#1f1f1f;letter-spacing:-0.126px;-webkit-text-stroke:0.27px;">SetIntelBacklight</span>
<span class="t" style="left:1212.30px;top:454.00px;font-size:20.8px;line-height:20.8px;color:#1f1f1f;letter-spacing:-0.169px;-webkit-text-stroke:0.27px;">SetIntelMaxBacklight</span>
<span class="t" style="left:1448.70px;top:456.00px;font-size:18.4px;line-height:18.4px;color:#1f1f1f;letter-spacing:-0.398px;-webkit-text-stroke:0.27px;">LANInjection</span>
<span class="t" style="left:986.10px;top:495.00px;font-size:20.8px;line-height:20.8px;color:#1f1f1f;letter-spacing:-0.396px;-webkit-text-stroke:0.27px;">IntelMaxValue</span>
<span class="t" style="left:1127.20px;top:498.00px;font-size:16.6px;line-height:16.6px;color:#bdbdbd;letter-spacing:0.066px;-webkit-text-stroke:0.27px;">1808 or 0x710</span>
<span class="t" style="left:1289.00px;top:495.00px;font-size:20.8px;line-height:20.8px;color:#1f1f1f;letter-spacing:-0.289px;-webkit-text-stroke:0.27px;">DisableFunctions</span>
<span class="t" style="left:1634.40px;top:495.00px;font-size:20.8px;line-height:20.8px;color:#1f1f1f;letter-spacing:-0.210px;-webkit-text-stroke:0.27px;">AirportBridgeDeviceName</span>
<span class="t" style="left:583.30px;top:546.00px;font-size:20.8px;line-height:20.8px;color:#1f1f1f;letter-spacing:-0.237px;-webkit-text-stroke:0.27px;">Add Properties</span>
<span class="t" style="left:588.10px;top:596.00px;font-size:20.8px;line-height:20.8px;color:#1f1f1f;letter-spacing:-0.429px;-webkit-text-stroke:0.27px;">Device*</span>
<span class="t" style="left:753.70px;top:596.00px;font-size:20.8px;line-height:20.8px;color:#1f1f1f;letter-spacing:-0.400px;-webkit-text-stroke:0.27px;transform:scaleX(0.9430);transform-origin:0 50%;">Key*</span>
<span class="t" style="left:1360.40px;top:596.00px;font-size:20.8px;line-height:20.8px;color:#1f1f1f;letter-spacing:-0.450px;-webkit-text-stroke:0.27px;">Value*</span>
<span class="t" style="left:1970.80px;top:596.00px;font-size:20.8px;line-height:20.8px;color:#1f1f1f;letter-spacing:-0.420px;-webkit-text-stroke:0.27px;">Disabled</span>
<span class="t" style="left:2077.00px;top:596.00px;font-size:20.8px;line-height:20.8px;color:#1f1f1f;letter-spacing:-0.460px;-webkit-text-stroke:0.27px;">Value Type</span>
<span class="t" style="left:588.40px;top:901.00px;font-size:20.8px;line-height:20.8px;color:#1f1f1f;letter-spacing:-0.466px;-webkit-text-stroke:0.27px;">Devices*</span>
<span class="t" style="left:586.50px;top:935.00px;font-size:20.8px;line-height:20.8px;color:#1f1f1f;letter-spacing:-0.123px;-webkit-text-stroke:0.27px;">PciRoot(0x0)/Pci(0x2,0x0)</span>
<span class="t" style="left:1278.60px;top:842.00px;font-size:24.2px;line-height:24.2px;color:#1c1c1c;letter-spacing:-0.036px;-webkit-text-stroke:0.27px;">Arbitrary</span>
<span class="t" style="left:1410.80px;top:842.00px;font-size:24.2px;line-height:24.2px;color:#fff;letter-spacing:-0.250px;-webkit-text-stroke:0.27px;">Properties</span>
<span class="t" style="left:1266.50px;top:900.00px;font-size:20.8px;line-height:20.8px;color:#1f1f1f;letter-spacing:-0.271px;-webkit-text-stroke:0.27px;">Properties Key*</span>
<span class="t" style="left:1617.80px;top:900.00px;font-size:20.8px;line-height:20.8px;color:#1f1f1f;letter-spacing:-0.255px;-webkit-text-stroke:0.27px;">Properties Value</span>
<span class="t" style="left:2077.00px;top:900.00px;font-size:20.8px;line-height:20.8px;color:#1f1f1f;letter-spacing:-0.438px;-webkit-text-stroke:0.27px;">Value Type</span>
<span class="t" style="left:1264.60px;top:935.00px;font-size:20.8px;line-height:20.8px;color:#fff;letter-spacing:0.072px;-webkit-text-stroke:0.27px;">AAPL,ig-platform-id</span>
<span class="t" style="left:1616.20px;top:935.00px;font-size:20.8px;line-height:20.8px;color:#fff;letter-spacing:-0.400px;-webkit-text-stroke:0.27px;transform:scaleX(0.9896);transform-origin:0 50%;">00001219</span>
<span class="t" style="left:2074.90px;top:935.00px;font-size:20.8px;line-height:20.8px;color:#fff;letter-spacing:-0.400px;-webkit-text-stroke:0.27px;transform:scaleX(0.9181);transform-origin:0 50%;">DATA</span>
<span class="t" style="left:1264.60px;top:962.00px;font-size:20.8px;line-height:20.8px;color:#1f1f1f;letter-spacing:0.167px;-webkit-text-stroke:0.27px;">framebuffer-patch-enable</span>
<span class="t" style="left:1616.20px;top:962.00px;font-size:20.8px;line-height:20.8px;color:#1f1f1f;letter-spacing:-0.062px;-webkit-text-stroke:0.27px;">01000000</span>
<span class="t" style="left:2074.90px;top:962.00px;font-size:20.8px;line-height:20.8px;color:#1f1f1f;letter-spacing:-0.400px;-webkit-text-stroke:0.27px;transform:scaleX(0.9181);transform-origin:0 50%;">DATA</span>
<span class="t" style="left:1264.60px;top:988.00px;font-size:20.8px;line-height:20.8px;color:#1f1f1f;letter-spacing:0.060px;-webkit-text-stroke:0.27px;">framebuffer-stolenmem</span>
<span class="t" style="left:1616.20px;top:988.00px;font-size:20.8px;line-height:20.8px;color:#1f1f1f;letter-spacing:-0.062px;-webkit-text-stroke:0.27px;">00003001</span>
<span class="t" style="left:2074.90px;top:988.00px;font-size:20.8px;line-height:20.8px;color:#1f1f1f;letter-spacing:-0.400px;-webkit-text-stroke:0.27px;transform:scaleX(0.9181);transform-origin:0 50%;">DATA</span>
</div></div>
</body></html>
